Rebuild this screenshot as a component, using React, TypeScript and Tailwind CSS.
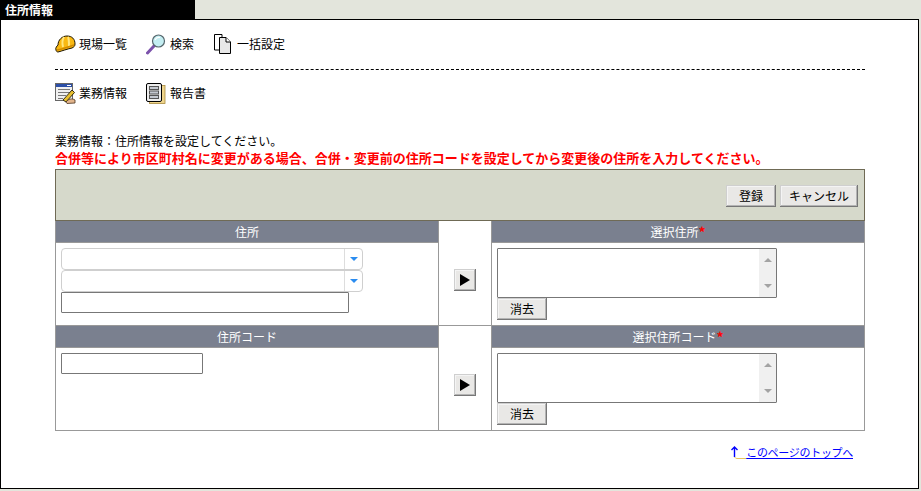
const font = "[font-family:'Noto_Sans_CJK_JP','Liberation_Sans',sans-serif]";

function Helmet() {
  return (
    <svg width="21" height="18" viewBox="0 0 21 18">
      <path d="M1 15 C0 13 2 11 3 10 C3 5 7 1 12 1 C17 1 20 4 20 9 C20 11 19 12 17 13 C12 14 7 16 3 17 C2 17 1 16 1 15 Z" fill="#f9b912" stroke="#1c1400" strokeWidth="1" />
      <path d="M9 2 C7 5 7 8 8 12 M13 2 C14 4 14 7 14 11" fill="none" stroke="#ffe680" strokeWidth="2" />
      <path d="M2 15 C8 14 13 12 19 10" fill="none" stroke="#d18a00" strokeWidth="1.4" />
    </svg>
  );
}

function Lens() {
  return (
    <svg width="20" height="21" viewBox="0 0 20 21">
      <path d="M1.5 19 L8 12" stroke="#7b52ab" strokeWidth="3" strokeLinecap="round" />
      <circle cx="12.5" cy="7" r="6" fill="#c4eef2" stroke="#55666c" strokeWidth="1.2" />
      <path d="M9 6 C10 4 12 3 14 3.5" fill="none" stroke="#ffffff" strokeWidth="1.2" />
    </svg>
  );
}

function Copies() {
  return (
    <svg width="20" height="22" viewBox="0 0 20 22">
      <path d="M1.5 1.5 H9 L9 17 H1.5 Z" fill="#ffffff" stroke="#000000" />
      <path d="M6.5 4.5 H13 L17.5 9 V20.5 H6.5 Z" fill="#e8e8e8" stroke="#000000" />
      <path d="M13 4.5 V9 H17.5" fill="#ffffff" stroke="#000000" />
    </svg>
  );
}

function Form() {
  return (
    <svg width="21" height="21" viewBox="0 0 21 21">
      <rect x="0.5" y="0.5" width="17" height="17" fill="#f0f0f0" stroke="#666666" />
      <rect x="1" y="1" width="16" height="3" fill="#2c4fa8" />
      <rect x="12" y="2" width="4" height="1" fill="#ffffff" />
      <path d="M3 6.5 H15 M3 9.5 H15 M3 12.5 H11 M3 15.5 H8" stroke="#777777" strokeWidth="1" />
      <path d="M8 17 L17 7 L19.5 9.5 L11 19 Z" fill="#e8c02f" stroke="#1f1a08" strokeWidth="0.9" />
      <path d="M11 19 C13 16 17 15 20 17 L20 20 L12 20.5 Z" fill="#e3b58c" stroke="#4a3320" strokeWidth="0.8" />
    </svg>
  );
}

function Report() {
  return (
    <svg width="20" height="21" viewBox="0 0 20 21">
      <rect x="3.5" y="2.5" width="15.5" height="18" fill="#efd58c" stroke="#a88a3c" strokeWidth="0.8" />
      <rect x="0.5" y="0.5" width="15" height="18" rx="1.5" fill="#ededed" stroke="#000000" />
      <rect x="3.5" y="3.5" width="9" height="3" fill="#c5c9d0" stroke="#555555" />
      <rect x="3.5" y="8" width="9" height="3" fill="#c5c9d0" stroke="#555555" />
      <rect x="3.5" y="12.5" width="9" height="3" fill="#c5c9d0" stroke="#555555" />
    </svg>
  );
}

function NavItem({ icon, label }: { icon: React.ReactNode; label: string }) {
  return (
    <div className="flex items-center text-[12px] leading-none text-black">
      <span className="flex w-[24px] justify-start">{icon}</span>
      <span>{label}</span>
    </div>
  );
}

function RaisedButton({ label, className }: { label: string; className: string }) {
  return (
    <button className={`block bg-[#e9e8e6] text-[12px] leading-none text-black shadow-[inset_-1px_-1px_0_#777777,inset_1px_1px_0_#cfcfcf,inset_-2px_-2px_0_#b4b4b4,inset_2px_2px_0_#f4f4f4] ${className}`}>
      {label}
    </button>
  );
}

function ComboBox() {
  return (
    <div className="flex h-[22px] w-[302px] rounded-[4px] border border-[#cfcfcf] bg-white">
      <div className="flex-1" />
      <div className="flex w-[18px] items-center justify-center border-l border-[#dddddd]">
        <span className="h-0 w-0 border-x-[4px] border-t-[4px] border-x-transparent border-t-[#2a8cf0]" />
      </div>
    </div>
  );
}

function ListArea() {
  return (
    <div className="flex h-[50px] w-[280px] justify-end rounded-[1px] border border-[#777777] bg-white">
      <div className="flex w-[17px] flex-col items-center justify-between bg-[#f0f0f0] py-[9px]">
        <span className="h-0 w-0 border-x-[4px] border-b-[4px] border-x-transparent border-b-[#a3a3a3]" />
        <span className="h-0 w-0 border-x-[4px] border-t-[4px] border-x-transparent border-t-[#a3a3a3]" />
      </div>
    </div>
  );
}

function Head({ label, required }: { label: string; required?: boolean }) {
  return (
    <div className="flex h-[22px] items-center justify-center border-b border-[#999999] bg-[#7a808f] text-[12px] leading-none text-white">
      {label}
      {required && <span className="text-[14px] font-bold text-[#ff0000]">*</span>}
    </div>
  );
}

function ArrowCell() {
  return (
    <div className="flex items-center justify-center border-x border-[#999999] pt-[14px]">
      <button className="flex h-[22px] w-[22px] items-center justify-center bg-[#e9e8e6] shadow-[inset_-1px_-1px_0_#777777,inset_1px_1px_0_#cfcfcf,inset_-2px_-2px_0_#b4b4b4,inset_2px_2px_0_#f4f4f4]">
        <span className="h-0 w-0 border-y-[6px] border-l-[10px] border-y-transparent border-l-black" />
      </button>
    </div>
  );
}

function PickerCell({ label }: { label: string }) {
  return (
    <div>
      <Head label={label} required />
      <div className="pl-[5px] pt-[5px]">
        <ListArea />
        <RaisedButton label="消去" className="h-[22px] w-[50px]" />
      </div>
    </div>
  );
}

export default function App() {
  return (
    <div className={`h-[491px] w-[921px] overflow-hidden bg-[#e3e5dc] ${font}`}>
      <div className="flex h-[19px] w-[195px] items-center bg-black pl-[5px] text-[12px] font-bold leading-none text-white">
        住所情報
      </div>
      <div className="h-[470px] w-[919px] border border-black bg-white pl-[54px] pr-[53px] pt-[14px]">
        <div className="flex h-[20px] items-center gap-[19px]">
          <NavItem icon={<Helmet />} label="現場一覧" />
          <NavItem icon={<Lens />} label="検索" />
          <NavItem icon={<Copies />} label="一括設定" />
        </div>
        <div className="mt-[15px] border-t border-dashed border-black" />
        <div className="mt-[13px] flex h-[20px] items-center gap-[19px]">
          <NavItem icon={<Form />} label="業務情報" />
          <NavItem icon={<Report />} label="報告書" />
        </div>
        <p className="mt-[29px] text-[12px] leading-[17px] text-black">業務情報：住所情報を設定してください。</p>
        <p className="mb-[3px] text-[13px] font-bold leading-[17px] text-[#ff0000]">
          合併等により市区町村名に変更がある場合、合併・変更前の住所コードを設定してから変更後の住所を入力してください。
        </p>

        <div className="w-[810px]">
          <div className="flex h-[52px] items-center justify-end gap-[4px] border border-[#6f6a55] bg-[#d6d9cb] pr-[6px] pt-[2px]">
            <RaisedButton label="登録" className="h-[22px] w-[50px]" />
            <RaisedButton label="キャンセル" className="h-[22px] w-[78px]" />
          </div>
          <div className="border-x border-b border-[#999999]">
            <div className="grid h-[105px] grid-cols-[382px_54px_372px] border-b border-[#999999]">
              <div>
                <Head label="住所" />
                <div className="pl-[5px] pt-[5px]">
                  <ComboBox />
                  <ComboBox />
                  <div className="h-[21px] w-[288px] rounded-[1px] border border-[#777777] bg-white" />
                </div>
              </div>
              <ArrowCell />
              <PickerCell label="選択住所" />
            </div>
            <div className="grid h-[104px] grid-cols-[382px_54px_372px]">
              <div>
                <Head label="住所コード" />
                <div className="pl-[5px] pt-[5px]">
                  <div className="h-[21px] w-[142px] rounded-[1px] border border-[#777777] bg-white" />
                </div>
              </div>
              <ArrowCell />
              <PickerCell label="選択住所コード" />
            </div>
          </div>
        </div>

        <div className="mt-[14px] flex w-[798px] justify-end">
          <a href="#top" className="flex items-center text-[11px] leading-none tracking-[-0.3px] text-[#0000ff] underline">
            <svg width="16" height="14" viewBox="0 0 16 14">
              <path d="M4.5 12 V2 M1.5 5 L4.5 2 L7.5 5" fill="none" stroke="#0000ff" strokeWidth="1.4" />
              <path d="M4.5 12 C5 13 6 13.5 7 13.5 H16" fill="none" stroke="#e7c65a" strokeWidth="1" />
            </svg>
            このページのトップへ
          </a>
        </div>
      </div>
    </div>
  );
}
